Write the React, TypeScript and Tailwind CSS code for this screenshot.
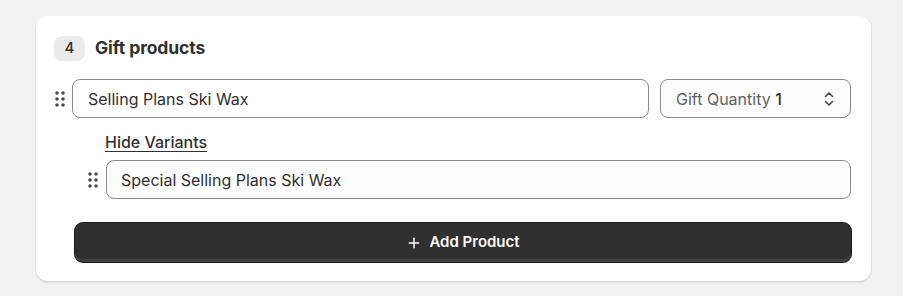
import { Plus } from 'lucide-react';

function DragHandle() {
  return (
    <svg width="12" height="18" viewBox="0 0 12 18" className="shrink-0 text-[#4a4a4a]">
      {[3, 9, 15].map((y) => (
        <g key={y}>
          <circle cx="3" cy={y} r="1.8" fill="currentColor" />
          <circle cx="9" cy={y} r="1.8" fill="currentColor" />
        </g>
      ))}
    </svg>
  );
}

function Chevrons() {
  return (
    <svg width="12" height="18" viewBox="0 0 12 18" fill="none" stroke="#4a4a4a" strokeWidth="1.6" strokeLinecap="round" strokeLinejoin="round">
      <path d="M2.5 6.5 6 3l3.5 3.5" />
      <path d="M2.5 11.5 6 15l3.5-3.5" />
    </svg>
  );
}

export default function App() {
  return (
    <div className="min-h-[296px] w-[903px] bg-[#f1f1f1] pt-4 pl-9 pr-8 font-['Inter',sans-serif] text-[#303030]">
      <div className="rounded-xl bg-white pt-[20px] pb-[19px] pl-[18px] pr-5 shadow-[0_1px_0_1px_rgba(0,0,0,0.06),0_1px_2px_rgba(0,0,0,0.06)]">
        <div className="flex h-[25px] items-center gap-[10px]">
          <span className="flex h-[25px] w-[31px] items-center justify-center rounded-lg bg-[#ebebeb] text-[15px] font-medium text-[#303030]">
            4
          </span>
          <span className="text-[17.5px] font-bold tracking-[-0.1px]">Gift products</span>
        </div>

        <div className="mt-[18px] flex items-center gap-[6px]">
          <DragHandle />
          <div className="flex h-[39px] flex-1 items-center rounded-lg border border-[#8a8a8a] bg-white px-[15px] text-[16px] text-[#303030]">
            Selling Plans Ski Wax
          </div>
          <div className="ml-[5px] flex h-[39px] w-[191px] items-center justify-between rounded-lg border border-[#8a8a8a] bg-[#fdfdfd] pl-[15px] pr-[15px] text-[16px]">
            <span>
              <span className="text-[#616161]">Gift Quantity </span>
              <span className="font-medium text-[#303030]">1</span>
            </span>
            <Chevrons />
          </div>
        </div>

        <div className="mt-[12px] h-[24px] pl-[51px]">
          <span className="text-[16px] font-medium text-[#303030] underline underline-offset-[3px]">Hide Variants</span>
        </div>

        <div className="mt-[6px] flex items-center gap-[7px] pl-[33px]">
          <DragHandle />
          <div className="flex h-[39px] flex-1 items-center rounded-lg border border-[#8a8a8a] bg-[#fdfdfd] px-[14px] text-[16px]">
            Special Selling Plans Ski Wax
          </div>
        </div>

        <button className="mt-[24px] ml-[21px] flex h-[39px] w-[calc(100%-21px)] items-center justify-center gap-[7px] rounded-lg bg-[#303030] text-[15px] font-semibold text-white shadow-[inset_0_-3px_0_rgba(255,255,255,0.08),0_0_0_1px_#1a1a1a]">
          <Plus size={16} strokeWidth={2.2} />
          Add Product
        </button>
      </div>
    </div>
  );
}
